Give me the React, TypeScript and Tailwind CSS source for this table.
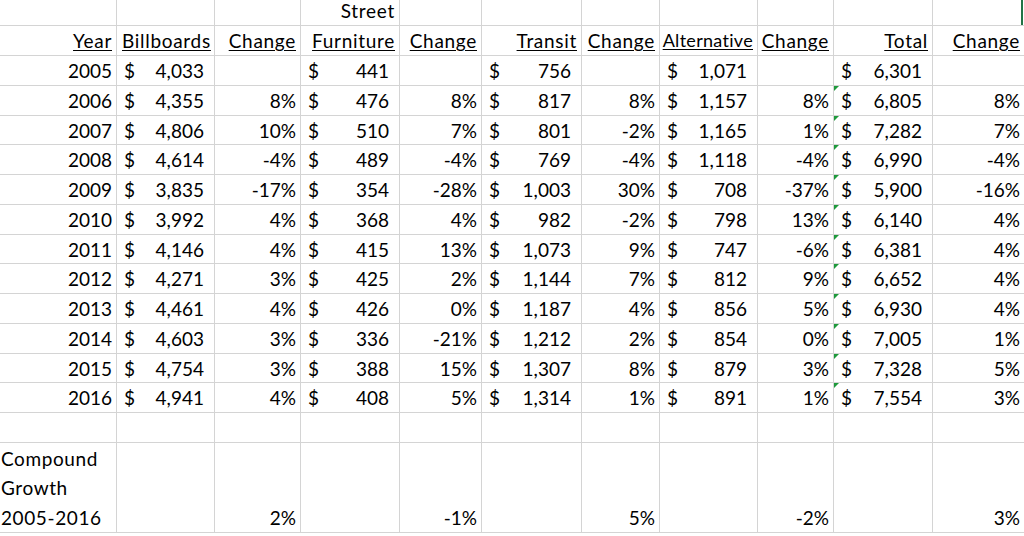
import React from "react";

type Row = {
  year: string;
  bb: string; bbc: string;
  sf: string; sfc: string;
  tr: string; trc: string;
  alt: string; altc: string;
  tot: string; totc: string;
};

const rows: Row[] = [
  { year: "2005", bb: "4,033", bbc: "", sf: "441", sfc: "", tr: "756", trc: "", alt: "1,071", altc: "", tot: "6,301", totc: "" },
  { year: "2006", bb: "4,355", bbc: "8%", sf: "476", sfc: "8%", tr: "817", trc: "8%", alt: "1,157", altc: "8%", tot: "6,805", totc: "8%" },
  { year: "2007", bb: "4,806", bbc: "10%", sf: "510", sfc: "7%", tr: "801", trc: "-2%", alt: "1,165", altc: "1%", tot: "7,282", totc: "7%" },
  { year: "2008", bb: "4,614", bbc: "-4%", sf: "489", sfc: "-4%", tr: "769", trc: "-4%", alt: "1,118", altc: "-4%", tot: "6,990", totc: "-4%" },
  { year: "2009", bb: "3,835", bbc: "-17%", sf: "354", sfc: "-28%", tr: "1,003", trc: "30%", alt: "708", altc: "-37%", tot: "5,900", totc: "-16%" },
  { year: "2010", bb: "3,992", bbc: "4%", sf: "368", sfc: "4%", tr: "982", trc: "-2%", alt: "798", altc: "13%", tot: "6,140", totc: "4%" },
  { year: "2011", bb: "4,146", bbc: "4%", sf: "415", sfc: "13%", tr: "1,073", trc: "9%", alt: "747", altc: "-6%", tot: "6,381", totc: "4%" },
  { year: "2012", bb: "4,271", bbc: "3%", sf: "425", sfc: "2%", tr: "1,144", trc: "7%", alt: "812", altc: "9%", tot: "6,652", totc: "4%" },
  { year: "2013", bb: "4,461", bbc: "4%", sf: "426", sfc: "0%", tr: "1,187", trc: "4%", alt: "856", altc: "5%", tot: "6,930", totc: "4%" },
  { year: "2014", bb: "4,603", bbc: "3%", sf: "336", sfc: "-21%", tr: "1,212", trc: "2%", alt: "854", altc: "0%", tot: "7,005", totc: "1%" },
  { year: "2015", bb: "4,754", bbc: "3%", sf: "388", sfc: "15%", tr: "1,307", trc: "8%", alt: "879", altc: "3%", tot: "7,328", totc: "5%" },
  { year: "2016", bb: "4,941", bbc: "4%", sf: "408", sfc: "5%", tr: "1,314", trc: "1%", alt: "891", altc: "1%", tot: "7,554", totc: "3%" },
];

const cell = "relative border-b border-r border-[#d4d4d4] overflow-hidden whitespace-nowrap";

// right-aligned plain cell (years, percentages)
function R({ children, last }: { children?: React.ReactNode; last?: boolean }) {
  return (
    <div className={`${last ? "relative border-b border-[#d4d4d4]" : cell} text-right pr-[4px] leading-[29px]`}>
      {children}
    </div>
  );
}

// accounting-format cell: "$" left, amount right
function Money({ v, flag }: { v: string; flag?: boolean }) {
  return (
    <div className={`${cell} flex justify-between pl-[7px] pr-[10px] leading-[29px]`}>
      {flag && (
        <span className="absolute left-0 top-0 h-0 w-0 border-l-[5px] border-b-[5px] border-l-[#1f9a3c] border-b-transparent" />
      )}
      <span>$</span>
      <span>{v}</span>
    </div>
  );
}

function Head({ children, className = "", last }: { children: React.ReactNode; className?: string; last?: boolean }) {
  return (
    <div className={`${last ? "border-b border-[#d4d4d4]" : cell} text-right pr-[4px] leading-[29px] tracking-[0.7px] ${className}`}>
      <span className="underline decoration-1 underline-offset-[2px]">{children}</span>
    </div>
  );
}

function Growth({ v, last }: { v: string; last?: boolean }) {
  return (
    <div className={`${last ? "border-b border-[#d4d4d4]" : cell} flex items-end justify-end pr-[4px] leading-[29.5px]`}>
      {v}
    </div>
  );
}

export default function App() {
  return (
    <div
      className="w-[1024px] h-[536px] overflow-hidden bg-white text-black text-[19px]"
      style={{ fontFamily: "Lato, 'Open Sans', sans-serif" }}
    >
      <div className="grid grid-cols-[117px_98px_86px_99px_82px_100px_78px_98px_76px_99px_91px] grid-rows-[26px_30px_repeat(12,29.75px)_30px_90px]">
        {/* header row 1 */}
        <div className={cell} />
        <div className={cell} />
        <div className={cell} />
        <div className={`${cell} text-right pr-[4px] leading-[42px] tracking-[0.7px]`}>
          <span className="relative -top-[10px]">Street</span>
        </div>
        <div className={cell} />
        <div className={cell} />
        <div className={cell} />
        <div className={cell} />
        <div className={cell} />
        <div className={cell} />
        <div className="flex justify-end border-b border-[#d4d4d4] pr-[1px]">
          <div className="w-[2px] bg-[#217346]" />
        </div>

        {/* header row 2 */}
        <Head>Year</Head>
        <Head className="!text-left pl-[5px]">Billboards</Head>
        <Head>Change</Head>
        <Head>Furniture</Head>
        <Head>Change</Head>
        <Head>Transit</Head>
        <Head className="pr-[2px]">Change</Head>
        <Head className="pr-[3px] text-[18px] !tracking-[0.3px]">Alternative</Head>
        <Head>Change</Head>
        <Head>Total</Head>
        <Head last>Change</Head>

        {rows.map((r, i) => (
          <React.Fragment key={r.year}>
            <R>{r.year}</R>
            <Money v={r.bb} />
            <R>{r.bbc}</R>
            <Money v={r.sf} />
            <R>{r.sfc}</R>
            <Money v={r.tr} />
            <R>{r.trc}</R>
            <Money v={r.alt} />
            <R>{r.altc}</R>
            <Money v={r.tot} flag={i > 0} />
            <R last>{r.totc}</R>
          </React.Fragment>
        ))}

        {/* empty row */}
        {Array.from({ length: 10 }).map((_, i) => (
          <div key={i} className={cell} />
        ))}
        <div className="border-b border-[#d4d4d4]" />

        {/* compound growth row */}
        <div className="border-b border-r border-[#d4d4d4] flex flex-col justify-end leading-[29.5px] pl-[1px] tracking-[0.6px]">
          <span>Compound</span>
          <span>Growth</span>
          <span>2005-2016</span>
        </div>
        <div className={cell} />
        <Growth v="2%" />
        <div className={cell} />
        <Growth v="-1%" />
        <div className={cell} />
        <Growth v="5%" />
        <div className={cell} />
        <Growth v="-2%" />
        <div className={cell} />
        <Growth v="3%" last />
      </div>
    </div>
  );
}
